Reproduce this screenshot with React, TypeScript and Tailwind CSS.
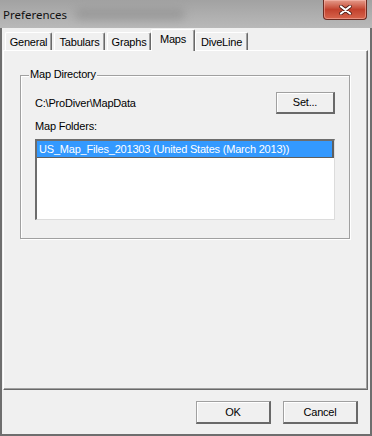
const tabs = [
  { label: 'General', w: 'w-[47px]', ml: 'ml-[2px]' },
  { label: 'Tabulars', w: 'w-[51px]', ml: 'ml-[2px]' },
  { label: 'Graphs', w: 'w-[44px]', ml: 'ml-[2px]' },
  { label: 'Maps', w: 'w-[44px]', ml: 'ml-0', active: true },
  { label: 'DiveLine', w: 'w-[53px]', ml: 'ml-0' },
];

function Tab({ label, w, ml, active }: { label: string; w: string; ml: string; active?: boolean }) {
  if (active) {
    return (
      <div
        className={`relative z-10 flex h-[22px] items-start justify-center whitespace-nowrap rounded-t-[2px] border-l border-t border-r border-white border-r-[#696969] bg-[#f0f0f0] pt-[3px] leading-[13px] shadow-[inset_-1px_0_#a0a0a0] ${w} ${ml}`}
      >
        {label}
      </div>
    );
  }
  return (
    <div
      className={`flex h-[19px] items-start justify-center whitespace-nowrap rounded-t-[2px] border-l border-t border-r border-white border-r-[#696969] bg-[#f0f0f0] pt-[3px] leading-[13px] shadow-[inset_-1px_0_#a0a0a0] ${w} ${ml}`}
    >
      {label}
    </div>
  );
}

function WinButton({ label, w, h }: { label: string; w: string; h: string }) {
  return (
    <button
      type="button"
      className={`flex items-center justify-center border border-r-2 border-b-2 border-[#a0a0a0] border-r-[#696969] border-b-[#696969] bg-[#f0f0f0] leading-[13px] tracking-[-0.2px] text-black shadow-[inset_1px_1px_0_#ffffff] ${w} ${h}`}
    >
      {label}
    </button>
  );
}

export default function App() {
  return (
    <div className="flex h-[436px] w-[372px] flex-col overflow-hidden bg-[#6e6e6e] font-['Liberation_Sans',Arial,sans-serif] text-[11px] tracking-[-0.2px] text-black">
      {/* title bar */}
      <div className="relative flex h-[28px] flex-shrink-0 items-center bg-gradient-to-b from-[#a2a2a2] to-[#b9b9b9] pl-[3px] pt-[2px]">
        <div className="absolute left-[75px] top-[8px] h-[12px] w-[110px] rounded-full bg-[#8e8e8e]/60 blur-[4px]" />
        <span className="relative font-['Noto_Sans','Open_Sans',sans-serif] text-[11.5px] tracking-normal text-[#111]">Preferences</span>
        <div className="absolute right-[5px] top-0 flex h-[20px] w-[44px] items-center justify-center rounded-b-[4px] border border-t-0 border-[#6b2b22] bg-gradient-to-b from-[#e49a8a] via-[#c2412d] to-[#d7644c] shadow-[inset_0_0_0_1px_rgba(255,200,190,0.45)]">
          <svg width="13" height="10" viewBox="0 0 13 10">
            <path d="M2 1.5 L11 8.5 M11 1.5 L2 8.5" stroke="#4a1a14" strokeWidth="3.6" strokeLinecap="round" />
            <path d="M2 1.5 L11 8.5 M11 1.5 L2 8.5" stroke="#ffffff" strokeWidth="2.2" strokeLinecap="round" />
          </svg>
        </div>
      </div>

      {/* body */}
      <div className="mx-[2px] mb-[2px] flex flex-1 flex-col bg-[#f0f0f0] pt-[1px]">
        <div className="ml-[1px] flex h-[22px] items-end">
          {tabs.map((t) => (
            <Tab key={t.label} {...t} />
          ))}
        </div>

        <div className="-mt-px ml-[1px] mr-[2px] h-[340px] border border-white border-r-[#696969] border-b-[#696969] bg-[#f0f0f0] shadow-[inset_-1px_-1px_0_#a0a0a0]">
          <div className="relative ml-[16px] mt-[24px] h-[164px] w-[330px] border border-[#a0a0a0] shadow-[1px_1px_0_#ffffff,inset_1px_1px_0_#ffffff]">
            <span className="absolute -top-[8px] left-[8px] whitespace-nowrap bg-[#f0f0f0] px-[1px] leading-[13px]">Map Directory</span>
            <div className="flex flex-col px-[14px] pt-[16px]">
              <div className="flex h-[22px] items-center justify-between">
                <span className="whitespace-nowrap leading-[13px]">C:\ProDiver\MapData</span>
                <WinButton label="Set..." w="w-[59px]" h="h-[22px]" />
              </div>
              <div className="mt-[6px] leading-[13px]">Map Folders:</div>
              <div className="mt-[6px] h-[81px] border-t-2 border-l-2 border-r border-b border-[#6d6d6d] border-r-[#dcdcdc] border-b-[#dcdcdc] bg-white">
                <div className="h-[17px] whitespace-nowrap border-r-2 border-b border-[#5f5f5f] bg-[#3399ff] pl-[2px] leading-[16px] text-white">
                  US_Map_Files_201303 (United States (March 2013))
                </div>
              </div>
            </div>
          </div>
        </div>

        <div className="flex justify-end gap-[12px] pr-[12px] pt-[11px]">
          <WinButton label="OK" w="w-[75px]" h="h-[23px]" />
          <WinButton label="Cancel" w="w-[75px]" h="h-[23px]" />
        </div>
      </div>
    </div>
  );
}
